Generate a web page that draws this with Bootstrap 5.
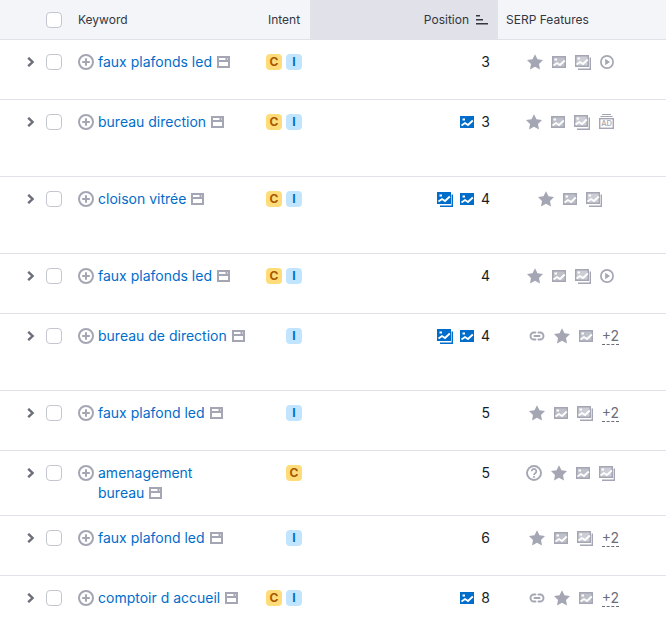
<!DOCTYPE html>
<html lang="en"><head><meta charset="utf-8"><title>Keywords</title>
<link href="https://cdn.jsdelivr.net/npm/bootstrap@5.3.0/dist/css/bootstrap.min.css" rel="stylesheet">
<style>
html,body{height:628px;overflow:hidden;background:#fff}
body{font-family:Inter,"Liberation Sans",sans-serif;font-size:14px;line-height:20px;color:#181e25}
.hd{height:40px;background:#f4f5f9;border-bottom:1px solid #e0e1e9;font-size:12px;color:#333741}
.rw{border-bottom:1px solid #e0e1e9;padding-top:12px}
.r60{height:60px}.r77{height:77px}.r65{height:65px}
.c-ch{width:46px;padding-left:27px;flex:none}
.c-cb{width:32px;flex:none}
.c-kw{width:180px;flex:none}
.c-in{width:44px;flex:none}
.c-gap{width:8px;flex:none}
.c-po{width:188px;flex:none;padding-right:8px;column-gap:7px}
.c-se{width:144px;flex:none;margin-top:2px;column-gap:9px}
.hd .c-po{background:#e0e1e9;height:39px;padding-right:10px}
.hd .c-se{padding-left:8px;width:168px;margin-top:0}
.hd .c-in{padding-left:10px}
.cbx.form-check-input{width:16px;height:16px;margin:2px 0 0;border:1px solid #c4c7cf;border-radius:4px;display:block;float:none}
.hd .cbx.form-check-input{margin-top:0}
.lnk{color:#006dca;text-decoration:none}
.ico{display:block;flex:none}
.gy{color:#a4a6b3}
.bl{color:#006dca}
.kw-plus{margin:2px 4px 0 0;color:#a4a6b3}
.win{display:inline-block;vertical-align:-1px;margin-left:1px;color:#a4a6b3}
.bdg{width:16px;height:16px;margin-top:2px;border-radius:4px;font-size:12px;line-height:16px;font-weight:700;text-align:center}
.b-c{background:#ffdc7a;color:#a75800}
.b-i{background:#c2e5ff;color:#006dca}
.more{color:#6c6e79;line-height:16px;height:17px;border-bottom:1px dashed #6c6e79;margin-right:-8px}
.ch{color:#6c6e79;margin-top:5px}
</style></head><body>
<svg width="0" height="0" class="position-absolute">
<defs>
<symbol id="i-star" viewBox="0 0 16 16"><path fill="currentColor" d="M8 .2l2.500 5 5.500.8-4 3.900 1 5.500L8 12.800l-5 2.600 1-5.500-4-3.900 5.500-.8z"/></symbol>
<symbol id="i-img" viewBox="0 0 14 12"><path fill="currentColor" d="M0 0h14v12H0z"/><path fill="#fff" opacity=".3" d="M1.500 1.500h11v9h-11z"/><path fill="none" stroke="#fff" stroke-width="1.800" d="M1.500 9.500L5 7l3 2 4.800-4.500"/><path fill="#fff" d="M2.500 2.500h2.500v2H2.500z"/></symbol>
<symbol id="i-imgb" viewBox="0 0 14 12"><path fill="currentColor" d="M0 0h14v12H0z"/><path fill="none" stroke="#fff" stroke-width="1.800" d="M1.500 9.500L5 7l3 2 4.800-4.500"/><path fill="#fff" d="M2.500 2.500h2.500v2H2.500z"/></symbol>
<symbol id="i-stack" viewBox="0 0 16 15"><path fill="currentColor" d="M0 0h14v12H0z"/><path fill="#fff" opacity=".45" d="M1.500 1.500h11v9h-11z"/><path fill="none" stroke="#fff" stroke-width="1.800" d="M1.500 9.500L5 7l3 2 4.800-4.500"/><path fill="#fff" d="M2.500 2.500h2.500v2H2.500z"/><path fill="currentColor" d="M14.600 2.500H16V15H3v-1.400h11.600z"/></symbol>
<symbol id="i-stackb" viewBox="0 0 16 15"><path fill="currentColor" d="M0 0h14v12H0z"/><path fill="none" stroke="#fff" stroke-width="1.800" d="M1.500 9.500L5 7l3 2 4.800-4.500"/><path fill="#fff" d="M2.500 2.500h2.500v2H2.500z"/><path fill="currentColor" d="M14.600 2.500H16V15H3v-1.400h11.600z"/></symbol>
<symbol id="i-play" viewBox="0 0 14 14"><circle cx="7" cy="7" r="6.100" fill="none" stroke="currentColor" stroke-width="1.700"/><path fill="currentColor" d="M5.200 3.800L10 7l-4.800 3.200z"/></symbol>
<symbol id="i-ad" viewBox="0 0 15 15"><path fill="currentColor" d="M3 0h9v1H3zM1.500 2h12v1h-12z"/><rect x=".7" y="4.700" width="13.600" height="9.600" fill="none" stroke="currentColor" stroke-width="1.400"/><text x="7.500" y="12.400" font-family="Inter,sans-serif" font-size="7.500" font-weight="500" text-anchor="middle" fill="currentColor">AD</text></symbol>
<symbol id="i-link" viewBox="0 0 16 12"><path fill="none" stroke="currentColor" stroke-width="1.900" stroke-linecap="round" d="M6.500 2.500H5a3.500 3.500 0 0 0 0 7h1.500M9.500 2.500H11a3.500 3.500 0 0 1 0 7H9.500M5.500 6h5"/></symbol>
<symbol id="i-q" viewBox="0 0 16 16"><circle cx="8" cy="8" r="7" fill="none" stroke="currentColor" stroke-width="1.900"/><path fill="none" stroke="currentColor" stroke-width="1.800" d="M5.700 6.200a2.300 2.300 0 1 1 3.500 2c-.8.500-1.200.900-1.200 1.800"/><path fill="currentColor" d="M7.100 11h1.800v1.700H7.100z"/></symbol>
<symbol id="i-plus" viewBox="0 0 16 16"><circle cx="8" cy="8" r="7" fill="none" stroke="currentColor" stroke-width="2"/><path stroke="currentColor" stroke-width="2" d="M8 4.200v7.600M4.200 8h7.600"/></symbol>
<symbol id="i-win" viewBox="0 0 13 12"><path fill="currentColor" fill-rule="evenodd" d="M0 0h13v12H0zM2 2v2h6.500V2zm8.500 0v2H11V2zM2 6v4h9V6z"/></symbol>
<symbol id="i-ch" viewBox="0 0 8 10"><path fill="none" stroke="currentColor" stroke-width="2.400" d="M1.200.8L5.600 5 1.200 9.200"/></symbol>
<symbol id="i-sort" viewBox="0 0 12 10"><path fill="currentColor" d="M0 0h4v1.500H0zM0 4h7v1.500H0zM0 8h12v1.500H0z"/></symbol>
</defs></svg>

<main class="d-flex flex-column">
<div class="hd d-flex align-items-center">
  <div class="c-ch"></div>
  <div class="c-cb"><input class="form-check-input cbx" type="checkbox" aria-label="all"></div>
  <div class="c-kw">Keyword</div>
  <div class="c-in">Intent</div>
  <div class="c-gap"></div>
  <div class="c-po d-flex align-items-center justify-content-end"><span>Position</span><svg class="ico" width="12" height="10"><use href="#i-sort"/></svg></div>
  <div class="c-se">SERP Features</div>
</div>

<div class="rw r60 d-flex align-items-start">
  <div class="c-ch"><svg class="ico ch" width="8" height="10"><use href="#i-ch"/></svg></div>
  <div class="c-cb"><input class="form-check-input cbx" type="checkbox" aria-label="select"></div>
  <div class="c-kw d-flex"><svg class="ico kw-plus" width="16" height="16"><use href="#i-plus"/></svg><div><a class="lnk" href="#">faux plafonds led</a> <svg class="win" width="13" height="12"><use href="#i-win"/></svg></div></div>
  <div class="c-in d-flex justify-content-end gap-1"><div class="bdg b-c">C</div><div class="bdg b-i">I</div></div>
  <div class="c-gap"></div>
  <div class="c-po d-flex justify-content-end">3</div>
  <div class="c-se d-flex justify-content-center gy"><svg class="ico" width="16" height="16"><use href="#i-star"/></svg><svg class="ico" width="14" height="16" viewBox="0 -2 14 16"><use href="#i-img" width="14" height="12"/></svg><svg class="ico" width="16" height="16" viewBox="0 -1 16 16"><use href="#i-stack" width="16" height="15"/></svg><svg class="ico" width="14" height="16" viewBox="0 -1 14 16"><use href="#i-play" width="14" height="14"/></svg></div>
</div>

<div class="rw r77 d-flex align-items-start">
  <div class="c-ch"><svg class="ico ch" width="8" height="10"><use href="#i-ch"/></svg></div>
  <div class="c-cb"><input class="form-check-input cbx" type="checkbox" aria-label="select"></div>
  <div class="c-kw d-flex"><svg class="ico kw-plus" width="16" height="16"><use href="#i-plus"/></svg><div><a class="lnk" href="#">bureau direction</a> <svg class="win" width="13" height="12"><use href="#i-win"/></svg></div></div>
  <div class="c-in d-flex justify-content-end gap-1"><div class="bdg b-c">C</div><div class="bdg b-i">I</div></div>
  <div class="c-gap"></div>
  <div class="c-po d-flex justify-content-end"><svg class="ico bl" width="14" height="20" viewBox="0 -4 14 20"><use href="#i-imgb" width="14" height="12"/></svg><span>3</span></div>
  <div class="c-se d-flex justify-content-center gy"><svg class="ico" width="16" height="16"><use href="#i-star"/></svg><svg class="ico" width="14" height="16" viewBox="0 -2 14 16"><use href="#i-img" width="14" height="12"/></svg><svg class="ico" width="16" height="16" viewBox="0 -1 16 16"><use href="#i-stack" width="16" height="15"/></svg><svg class="ico" width="15" height="16"><use href="#i-ad" width="15" height="15"/></svg></div>
</div>

<div class="rw r77 d-flex align-items-start">
  <div class="c-ch"><svg class="ico ch" width="8" height="10"><use href="#i-ch"/></svg></div>
  <div class="c-cb"><input class="form-check-input cbx" type="checkbox" aria-label="select"></div>
  <div class="c-kw d-flex"><svg class="ico kw-plus" width="16" height="16"><use href="#i-plus"/></svg><div><a class="lnk" href="#">cloison vitrée</a> <svg class="win" width="13" height="12"><use href="#i-win"/></svg></div></div>
  <div class="c-in d-flex justify-content-end gap-1"><div class="bdg b-c">C</div><div class="bdg b-i">I</div></div>
  <div class="c-gap"></div>
  <div class="c-po d-flex justify-content-end"><svg class="ico bl" width="16" height="20" viewBox="0 -3 16 20"><use href="#i-stackb" width="16" height="15"/></svg><svg class="ico bl" width="14" height="20" viewBox="0 -4 14 20"><use href="#i-imgb" width="14" height="12"/></svg><span>4</span></div>
  <div class="c-se d-flex justify-content-center gy"><svg class="ico" width="16" height="16"><use href="#i-star"/></svg><svg class="ico" width="14" height="16" viewBox="0 -2 14 16"><use href="#i-img" width="14" height="12"/></svg><svg class="ico" width="16" height="16" viewBox="0 -1 16 16"><use href="#i-stack" width="16" height="15"/></svg></div>
</div>

<div class="rw r60 d-flex align-items-start">
  <div class="c-ch"><svg class="ico ch" width="8" height="10"><use href="#i-ch"/></svg></div>
  <div class="c-cb"><input class="form-check-input cbx" type="checkbox" aria-label="select"></div>
  <div class="c-kw d-flex"><svg class="ico kw-plus" width="16" height="16"><use href="#i-plus"/></svg><div><a class="lnk" href="#">faux plafonds led</a> <svg class="win" width="13" height="12"><use href="#i-win"/></svg></div></div>
  <div class="c-in d-flex justify-content-end gap-1"><div class="bdg b-c">C</div><div class="bdg b-i">I</div></div>
  <div class="c-gap"></div>
  <div class="c-po d-flex justify-content-end">4</div>
  <div class="c-se d-flex justify-content-center gy"><svg class="ico" width="16" height="16"><use href="#i-star"/></svg><svg class="ico" width="14" height="16" viewBox="0 -2 14 16"><use href="#i-img" width="14" height="12"/></svg><svg class="ico" width="16" height="16" viewBox="0 -1 16 16"><use href="#i-stack" width="16" height="15"/></svg><svg class="ico" width="14" height="16" viewBox="0 -1 14 16"><use href="#i-play" width="14" height="14"/></svg></div>
</div>

<div class="rw r77 d-flex align-items-start">
  <div class="c-ch"><svg class="ico ch" width="8" height="10"><use href="#i-ch"/></svg></div>
  <div class="c-cb"><input class="form-check-input cbx" type="checkbox" aria-label="select"></div>
  <div class="c-kw d-flex"><svg class="ico kw-plus" width="16" height="16"><use href="#i-plus"/></svg><div><a class="lnk" href="#">bureau de direction</a> <svg class="win" width="13" height="12"><use href="#i-win"/></svg></div></div>
  <div class="c-in d-flex justify-content-end gap-1"><div class="bdg b-i">I</div></div>
  <div class="c-gap"></div>
  <div class="c-po d-flex justify-content-end"><svg class="ico bl" width="16" height="20" viewBox="0 -3 16 20"><use href="#i-stackb" width="16" height="15"/></svg><svg class="ico bl" width="14" height="20" viewBox="0 -4 14 20"><use href="#i-imgb" width="14" height="12"/></svg><span>4</span></div>
  <div class="c-se d-flex justify-content-center gy"><svg class="ico" width="16" height="16" viewBox="0 -2 16 16"><use href="#i-link" width="16" height="12"/></svg><svg class="ico" width="16" height="16"><use href="#i-star"/></svg><svg class="ico" width="14" height="16" viewBox="0 -2 14 16"><use href="#i-img" width="14" height="12"/></svg><span class="more">+2</span></div>
</div>

<div class="rw r60 d-flex align-items-start">
  <div class="c-ch"><svg class="ico ch" width="8" height="10"><use href="#i-ch"/></svg></div>
  <div class="c-cb"><input class="form-check-input cbx" type="checkbox" aria-label="select"></div>
  <div class="c-kw d-flex"><svg class="ico kw-plus" width="16" height="16"><use href="#i-plus"/></svg><div><a class="lnk" href="#">faux plafond led</a> <svg class="win" width="13" height="12"><use href="#i-win"/></svg></div></div>
  <div class="c-in d-flex justify-content-end gap-1"><div class="bdg b-i">I</div></div>
  <div class="c-gap"></div>
  <div class="c-po d-flex justify-content-end">5</div>
  <div class="c-se d-flex justify-content-center gy"><svg class="ico" width="16" height="16"><use href="#i-star"/></svg><svg class="ico" width="14" height="16" viewBox="0 -2 14 16"><use href="#i-img" width="14" height="12"/></svg><svg class="ico" width="16" height="16" viewBox="0 -1 16 16"><use href="#i-stack" width="16" height="15"/></svg><span class="more">+2</span></div>
</div>

<div class="rw r65 d-flex align-items-start">
  <div class="c-ch"><svg class="ico ch" width="8" height="10"><use href="#i-ch"/></svg></div>
  <div class="c-cb"><input class="form-check-input cbx" type="checkbox" aria-label="select"></div>
  <div class="c-kw d-flex"><svg class="ico kw-plus" width="16" height="16"><use href="#i-plus"/></svg><div><a class="lnk" href="#">amenagement<br>bureau</a> <svg class="win" width="13" height="12"><use href="#i-win"/></svg></div></div>
  <div class="c-in d-flex justify-content-end gap-1"><div class="bdg b-c">C</div></div>
  <div class="c-gap"></div>
  <div class="c-po d-flex justify-content-end">5</div>
  <div class="c-se d-flex justify-content-center gy"><svg class="ico" width="16" height="16"><use href="#i-q"/></svg><svg class="ico" width="16" height="16"><use href="#i-star"/></svg><svg class="ico" width="14" height="16" viewBox="0 -2 14 16"><use href="#i-img" width="14" height="12"/></svg><svg class="ico" width="16" height="16" viewBox="0 -1 16 16"><use href="#i-stack" width="16" height="15"/></svg></div>
</div>

<div class="rw r60 d-flex align-items-start">
  <div class="c-ch"><svg class="ico ch" width="8" height="10"><use href="#i-ch"/></svg></div>
  <div class="c-cb"><input class="form-check-input cbx" type="checkbox" aria-label="select"></div>
  <div class="c-kw d-flex"><svg class="ico kw-plus" width="16" height="16"><use href="#i-plus"/></svg><div><a class="lnk" href="#">faux plafond led</a> <svg class="win" width="13" height="12"><use href="#i-win"/></svg></div></div>
  <div class="c-in d-flex justify-content-end gap-1"><div class="bdg b-i">I</div></div>
  <div class="c-gap"></div>
  <div class="c-po d-flex justify-content-end">6</div>
  <div class="c-se d-flex justify-content-center gy"><svg class="ico" width="16" height="16"><use href="#i-star"/></svg><svg class="ico" width="14" height="16" viewBox="0 -2 14 16"><use href="#i-img" width="14" height="12"/></svg><svg class="ico" width="16" height="16" viewBox="0 -1 16 16"><use href="#i-stack" width="16" height="15"/></svg><span class="more">+2</span></div>
</div>

<div class="rw r60 d-flex align-items-start">
  <div class="c-ch"><svg class="ico ch" width="8" height="10"><use href="#i-ch"/></svg></div>
  <div class="c-cb"><input class="form-check-input cbx" type="checkbox" aria-label="select"></div>
  <div class="c-kw d-flex"><svg class="ico kw-plus" width="16" height="16"><use href="#i-plus"/></svg><div><a class="lnk" href="#">comptoir d accueil</a> <svg class="win" width="13" height="12"><use href="#i-win"/></svg></div></div>
  <div class="c-in d-flex justify-content-end gap-1"><div class="bdg b-c">C</div><div class="bdg b-i">I</div></div>
  <div class="c-gap"></div>
  <div class="c-po d-flex justify-content-end"><svg class="ico bl" width="14" height="20" viewBox="0 -4 14 20"><use href="#i-imgb" width="14" height="12"/></svg><span>8</span></div>
  <div class="c-se d-flex justify-content-center gy"><svg class="ico" width="16" height="16" viewBox="0 -2 16 16"><use href="#i-link" width="16" height="12"/></svg><svg class="ico" width="16" height="16"><use href="#i-star"/></svg><svg class="ico" width="14" height="16" viewBox="0 -2 14 16"><use href="#i-img" width="14" height="12"/></svg><span class="more">+2</span></div>
</div>
</main>
<script src="https://cdn.jsdelivr.net/npm/bootstrap@5.3.0/dist/js/bootstrap.bundle.min.js"></script>
</body></html>
